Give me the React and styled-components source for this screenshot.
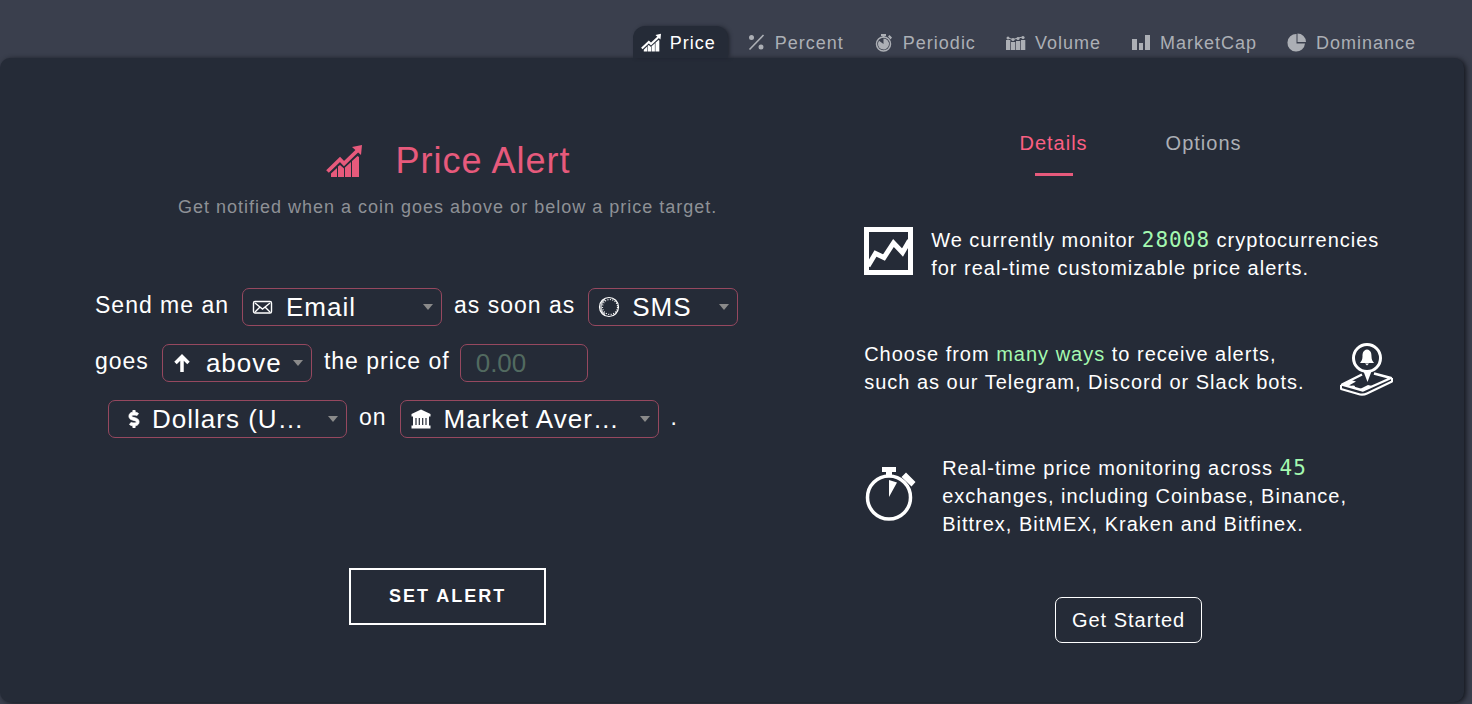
import React from 'react';
import styled, { createGlobalStyle, ThemeProvider } from 'styled-components';
import { FaDollarSign } from 'react-icons/fa';

const theme = {
  page: '#3a3f4d',
  panel: '#252b37',
  accent: '#e75a7c',
  accentDim: '#96485f',
  green: '#a4f9b0',
  muted: '#8e9196',
  tab: '#acafb5',
};

const GlobalStyle = createGlobalStyle`
  *, *::before, *::after {
    box-sizing: border-box;
  }

  body {
    margin: 0;
    background-color: ${({ theme }) => theme.page};
    color: #fff;
    font-family: 'Liberation Sans', Arial, sans-serif;
    font-size: 20px;
    letter-spacing: 1px;
  }

  button, input, select {
    font: inherit;
    letter-spacing: inherit;
    color: inherit;
  }
`;

const StyledPage = styled.div`
  padding: 26px 8px 2px 0;
`;

const StyledNav = styled.nav`
  display: flex;
  justify-content: flex-end;
  gap: 10px;
  padding-right: 36px;
`;

const StyledNavTab = styled.a`
  display: flex;
  align-items: center;
  gap: 9px;
  height: 32px;
  padding: 2px 12px 0 8px;
  border-radius: 12px 12px 0 0;
  color: ${({ $active, theme }) => ($active ? '#fff' : theme.tab)};
  background-color: ${({ $active, theme }) => ($active ? theme.panel : 'transparent')};
  box-shadow: ${({ $active }) => ($active ? '2px 0 4px -1px #1b1f28' : 'none')};
  font-size: 18px;
  text-decoration: none;

  svg {
    width: 20px;
    height: 20px;
  }
`;

const StyledPanel = styled.main`
  display: grid;
  grid-template-columns: 4fr 3fr;
  column-gap: 64px;
  padding: 71px 71px 59px 95px;
  border-radius: 10px;
  background-color: ${({ theme }) => theme.panel};
  box-shadow: 2px 1px 5px #14171e;
`;

const StyledAlertForm = styled.form`
  display: flex;
  flex-direction: column;
  align-items: center;
  padding-top: 10px;
`;

const StyledHeading = styled.h1`
  display: flex;
  align-items: center;
  gap: 33px;
  margin: 0;
  color: ${({ theme }) => theme.accent};
  font-size: 36px;
  font-weight: 400;
  line-height: 44px;

  svg {
    width: 38px;
    height: 33px;
  }
`;

const StyledParagraph = styled.p`
  margin: 12px 0 69px;
  color: ${({ theme }) => theme.muted};
  font-size: 18px;
  line-height: 24px;
`;

const StyledSentence = styled.div`
  display: flex;
  flex-direction: column;
  align-self: stretch;
  gap: 18px;
  font-size: 23px;
`;

const StyledRow = styled.div`
  display: flex;
  align-items: center;
`;

const StyledLabel = styled.label`
  padding-bottom: 4px;
  line-height: 28px;
  white-space: nowrap;
`;

const StyledField = styled.div`
  display: flex;
  align-items: center;
  gap: 10px;
  width: ${({ $width }) => $width}px;
  height: 38px;
  margin: 0 12px 0 13px;
  padding: 0 8px 0 9px;
  border: 1px solid ${({ theme }) => theme.accentDim};
  border-radius: 7px;

  > svg {
    flex: none;
    width: 22px;
    height: 22px;
  }

  &::after {
    content: '';
    flex: none;
    border: 5px solid transparent;
    border-top: 6px solid #8a8a8a;
    border-bottom: 0;
  }
`;

const StyledSelect = styled.select`
  flex: 1;
  min-width: 0;
  height: 36px;
  padding: 0 0 0 2px;
  border: 0;
  outline: 0;
  appearance: none;
  background: transparent;
  font-size: 26px;
  text-overflow: ellipsis;

  option {
    background-color: ${({ theme }) => theme.panel};
  }
`;

const StyledInput = styled.input`
  width: 128px;
  height: 38px;
  margin: 0 12px 0 10px;
  padding: 0 15px;
  border: 1px solid ${({ theme }) => theme.accentDim};
  border-radius: 7px;
  background: transparent;
  font-size: 26px;
  letter-spacing: 0;

  &::placeholder {
    color: #526a60;
    opacity: 1;
  }
`;

const StyledSubmit = styled.button`
  margin-top: 130px;
  padding: 0 38px;
  border: 2px solid #fff;
  background: transparent;
  font-size: 18px;
  font-weight: 700;
  letter-spacing: 2px;
  line-height: 53px;
`;

const StyledInfo = styled.section`
  display: flex;
  flex-direction: column;
  align-items: center;
`;

const StyledInfoTabs = styled.div`
  display: flex;
  margin-bottom: 50px;
`;

const StyledInfoTab = styled.button`
  display: flex;
  flex-direction: column;
  align-items: center;
  gap: 16px;
  width: 150px;
  padding: 0;
  border: 0;
  background: transparent;
  color: ${({ $active, theme }) => ($active ? '#fb5f82' : theme.tab)};
  line-height: 28px;

  &::after {
    content: '';
    width: 38px;
    height: 3px;
    background-color: ${({ $active, theme }) => ($active ? theme.accent : 'transparent')};
  }
`;

const StyledFeatures = styled.div`
  display: flex;
  flex-direction: column;
  align-self: stretch;
  gap: 58px;
  margin-bottom: 59px;
`;

const StyledFeature = styled.div`
  display: flex;
  align-items: ${({ $align }) => $align || 'center'};
  justify-content: ${({ $spread }) => ($spread ? 'space-between' : 'flex-start')};
  gap: ${({ $gap }) => $gap}px;

  svg {
    flex: none;
  }

  p {
    margin: 0;
    line-height: 28px;
  }
`;

const StyledNumber = styled.span`
  color: ${({ theme }) => theme.green};
  font-family: 'DejaVu Sans Mono', monospace;
  font-size: 21px;
  line-height: 20px;
`;

const StyledLink = styled.a`
  color: ${({ theme }) => theme.green};
  text-decoration: none;
`;

const StyledStart = styled.button`
  padding: 0 16px;
  border: 1px solid #fff;
  border-radius: 7px;
  background: transparent;
  line-height: 44px;
`;

const PriceIcon = () => (
  <svg viewBox="0 0 36 33" fill="currentColor" aria-hidden="true">
    <path d="M1.5 26.5 14 14.5l4 4L31.5 5.5" fill="none" stroke="currentColor" strokeWidth="3.8" />
    <path d="M26 2 36 0l-1 10zM5 32v-3.5l6-5.5v9zM12 32V21.500l2-1.500 4 3.500V32zM19 32v-9.500l6-5.500v15zM26 32V16l5.500-5 1.500 1v20z" />
  </svg>
);

const PercentIcon = () => (
  <svg viewBox="0 0 20 20" fill="currentColor" aria-hidden="true">
    <path d="M3.500 16.500 17.500 2" stroke="currentColor" strokeWidth="1.600" />
    <circle cx="5.500" cy="4.500" r="2.500" />
    <circle cx="15" cy="14" r="2.500" />
  </svg>
);

const PeriodicIcon = () => (
  <svg viewBox="0 0 20 20" fill="currentColor" aria-hidden="true">
    <circle cx="9.500" cy="11" r="7" fill="none" stroke="currentColor" strokeWidth="1.500" />
    <path d="M9.500 11V5.500a5.500 5.500 0 1 1-4.500 2.300zM7 1h5v2H7zM8.500 2.500h2v2h-2zM14 3.500l1.500-1.500 2.500 2.500-1.500 2z" />
  </svg>
);

const VolumeIcon = () => (
  <svg viewBox="0 0 20 20" fill="currentColor" aria-hidden="true">
    <path d="M0 7h4.300v10H0zM5 9h4.300v8H5zM10 8h4.300v9H10zM15 7h4.300v10H15z" />
    <path d="m2 5 5 1.500 5-1.500 5-1" fill="none" stroke="currentColor" />
    <circle cx="2" cy="5" r="1.500" />
    <circle cx="7" cy="6.500" r="1.600" />
    <circle cx="12" cy="5.500" r="1.600" />
    <circle cx="17" cy="4.500" r="1.600" />
  </svg>
);

const MarketCapIcon = () => (
  <svg viewBox="0 0 20 20" fill="currentColor" aria-hidden="true">
    <path d="M1 6h5v11H1zM8 10h4v7H8zM14 2h5v15h-5z" />
  </svg>
);

const DominanceIcon = () => (
  <svg viewBox="0 0 20 20" fill="currentColor" aria-hidden="true">
    <path d="M9.500 1v9.500H18A8.800 8.800 0 1 1 9.500 1z" />
    <path d="M10.500 .5a8.500 8.500 0 0 1 8.500 8.500h-8.500z" />
  </svg>
);

const MailIcon = () => (
  <svg viewBox="0 0 22 22" fill="none" stroke="currentColor" strokeWidth="1.400" aria-hidden="true">
    <rect x="1.500" y="5.500" width="18" height="11.500" rx="1.500" />
    <path d="m3 7 7.500 6L18 7M3 16l5-5M18 16l-5-5" />
  </svg>
);

const CoinIcon = () => (
  <svg viewBox="0 0 22 22" fill="none" stroke="currentColor" aria-hidden="true">
    <circle cx="11" cy="11" r="9.500" strokeWidth="1.200" />
    <circle cx="12" cy="11" r="7.500" strokeWidth="1.200" strokeDasharray="1 1.500" />
    <path d="M7 3.500a9 9 0 0 0 0 15" strokeWidth="1.600" strokeOpacity=".7" />
  </svg>
);

const ArrowIcon = () => (
  <svg viewBox="0 0 22 22" fill="none" stroke="currentColor" strokeWidth="3.500" aria-hidden="true">
    <path d="M10 20V4M3.500 11 10 4.500l6.500 6.500" />
  </svg>
);

const DollarIcon = () => (
  <svg viewBox="0 0 22 22" aria-hidden="true">
    <FaDollarSign x="7" y="2" size={18} stroke="currentColor" strokeWidth="24" />
  </svg>
);

const BankIcon = () => (
  <svg viewBox="0 0 22 22" fill="currentColor" aria-hidden="true">
    <path d="M11 1.500 20.500 6v2.500h-19V6zM3 8.500h16v9H3zM1.500 17.500h19v3h-19z" />
    <path d="M6 10v7M9.300 10v7M12.700 10v7M16 10v7" stroke="#252b37" strokeWidth="1.200" />
  </svg>
);

const ChartIcon = () => (
  <svg width="49" height="50" viewBox="0 -1 49 50" fill="none" stroke="currentColor" aria-hidden="true">
    <rect x="2.500" y="2.500" width="44" height="43" strokeWidth="5" />
    <path d="m4 39 7.500-12.500 8.500 4L29.500 16l9 9.500 7-12" strokeWidth="5" />
  </svg>
);

const PhoneIcon = () => (
  <svg width="53" height="56" viewBox="0 -3 53 56" fill="none" stroke="currentColor" aria-hidden="true">
    <path d="M22 31.500 2 41.500l21 6L51 35l-17-4.500" strokeWidth="2.400" strokeLinejoin="round" />
    <path d="M1 42v4l19 5.500q4 .5 7-1L52 38.500V35" strokeWidth="2" strokeLinejoin="round" />
    <path d="m2 41.500 9-4.500 5 1.500-8 4.500zM20 46l8-4 4 1-9 4.500z" fill="currentColor" stroke="none" />
    <ellipse cx="13" cy="43.500" rx="2" ry="1" fill="currentColor" stroke="none" />
    <circle cx="27" cy="15" r="13.500" strokeWidth="3" />
    <path d="m23 27 4.500 12L32 27z" fill="currentColor" stroke="none" />
    <path d="M27 6.500c-4 .5-4.500 4-4.500 7 0 3-1 4.500-2.500 6.500h14c-1.500-2-2.500-3.500-2.500-6.500 0-3-.5-6.500-4.500-7zM25 20.500h4l-2 2z" fill="currentColor" stroke="none" />
  </svg>
);

const StopwatchIcon = () => (
  <svg width="52" height="60" viewBox="0 1 52 60" fill="currentColor" aria-hidden="true">
    <circle cx="25" cy="32.500" r="21.500" fill="none" stroke="currentColor" strokeWidth="3.500" />
    <path d="M18 2h14v5h-4v4h-6V7h-4zM25 15l8 2.500L25 32zM37.500 12l4.500-4.500 9.500 9.500-4 4.500z" />
  </svg>
);

const tabs = [
  { name: 'Price', Icon: PriceIcon },
  { name: 'Percent', Icon: PercentIcon },
  { name: 'Periodic', Icon: PeriodicIcon },
  { name: 'Volume', Icon: VolumeIcon },
  { name: 'MarketCap', Icon: MarketCapIcon },
  { name: 'Dominance', Icon: DominanceIcon },
];

const SelectField = ({ id, label, icon, width, value }) => (
  <StyledField $width={width}>
    {icon}
    <StyledSelect id={id} aria-label={label} defaultValue={value}>
      <option>{value}</option>
    </StyledSelect>
  </StyledField>
);

const App = () => (
  <ThemeProvider theme={theme}>
    <GlobalStyle />
    <StyledPage>
      <StyledNav>
        {tabs.map(({ name, Icon }) => (
          <StyledNavTab key={name} href={`#${name}`} $active={name === 'Price'}>
            <Icon />
            {name}
          </StyledNavTab>
        ))}
      </StyledNav>
      <StyledPanel>
        <StyledAlertForm>
          <StyledHeading>
            <PriceIcon />
            Price Alert
          </StyledHeading>
          <StyledParagraph>
            Get notified when a coin goes above or below a price target.
          </StyledParagraph>
          <StyledSentence>
            <StyledRow>
              <StyledLabel htmlFor="channel">Send me an</StyledLabel>
              <SelectField id="channel" icon={<MailIcon />} width={200} value="Email" />
              <StyledLabel htmlFor="coin">as soon as</StyledLabel>
              <SelectField id="coin" icon={<CoinIcon />} width={150} value="SMS" />
            </StyledRow>
            <StyledRow>
              <StyledLabel htmlFor="direction">goes</StyledLabel>
              <SelectField id="direction" icon={<ArrowIcon />} width={150} value="above" />
              <StyledLabel htmlFor="price">the price of</StyledLabel>
              <StyledInput id="price" placeholder="0.00" />
            </StyledRow>
            <StyledRow>
              <SelectField
                id="currency"
                label="Currency"
                icon={<DollarIcon />}
                width={239}
                value="Dollars (USD)"
              />
              <StyledLabel htmlFor="exchange">on</StyledLabel>
              <SelectField id="exchange" icon={<BankIcon />} width={259} value="Market Average" />
              <StyledLabel as="span">.</StyledLabel>
            </StyledRow>
          </StyledSentence>
          <StyledSubmit type="button">SET ALERT</StyledSubmit>
        </StyledAlertForm>
        <StyledInfo>
          <StyledInfoTabs>
            <StyledInfoTab type="button" $active>
              Details
            </StyledInfoTab>
            <StyledInfoTab type="button">Options</StyledInfoTab>
          </StyledInfoTabs>
          <StyledFeatures>
            <StyledFeature $gap={18} $align="flex-start">
              <ChartIcon />
              <p>
                We currently monitor <StyledNumber>28008</StyledNumber> cryptocurrencies
                <br />
                for real-time customizable price alerts.
              </p>
            </StyledFeature>
            <StyledFeature $gap={20} $spread>
              <p>
                Choose from <StyledLink href="#ways">many ways</StyledLink> to receive alerts,
                <br />
                such as our Telegram, Discord or Slack bots.
              </p>
              <PhoneIcon />
            </StyledFeature>
            <StyledFeature $gap={26}>
              <StopwatchIcon />
              <p>
                Real-time price monitoring across <StyledNumber>45</StyledNumber>
                <br />
                exchanges, including Coinbase, Binance,
                <br />
                Bittrex, BitMEX, Kraken and Bitfinex.
              </p>
            </StyledFeature>
          </StyledFeatures>
          <StyledStart type="button">Get Started</StyledStart>
        </StyledInfo>
      </StyledPanel>
    </StyledPage>
  </ThemeProvider>
);

export default App;
